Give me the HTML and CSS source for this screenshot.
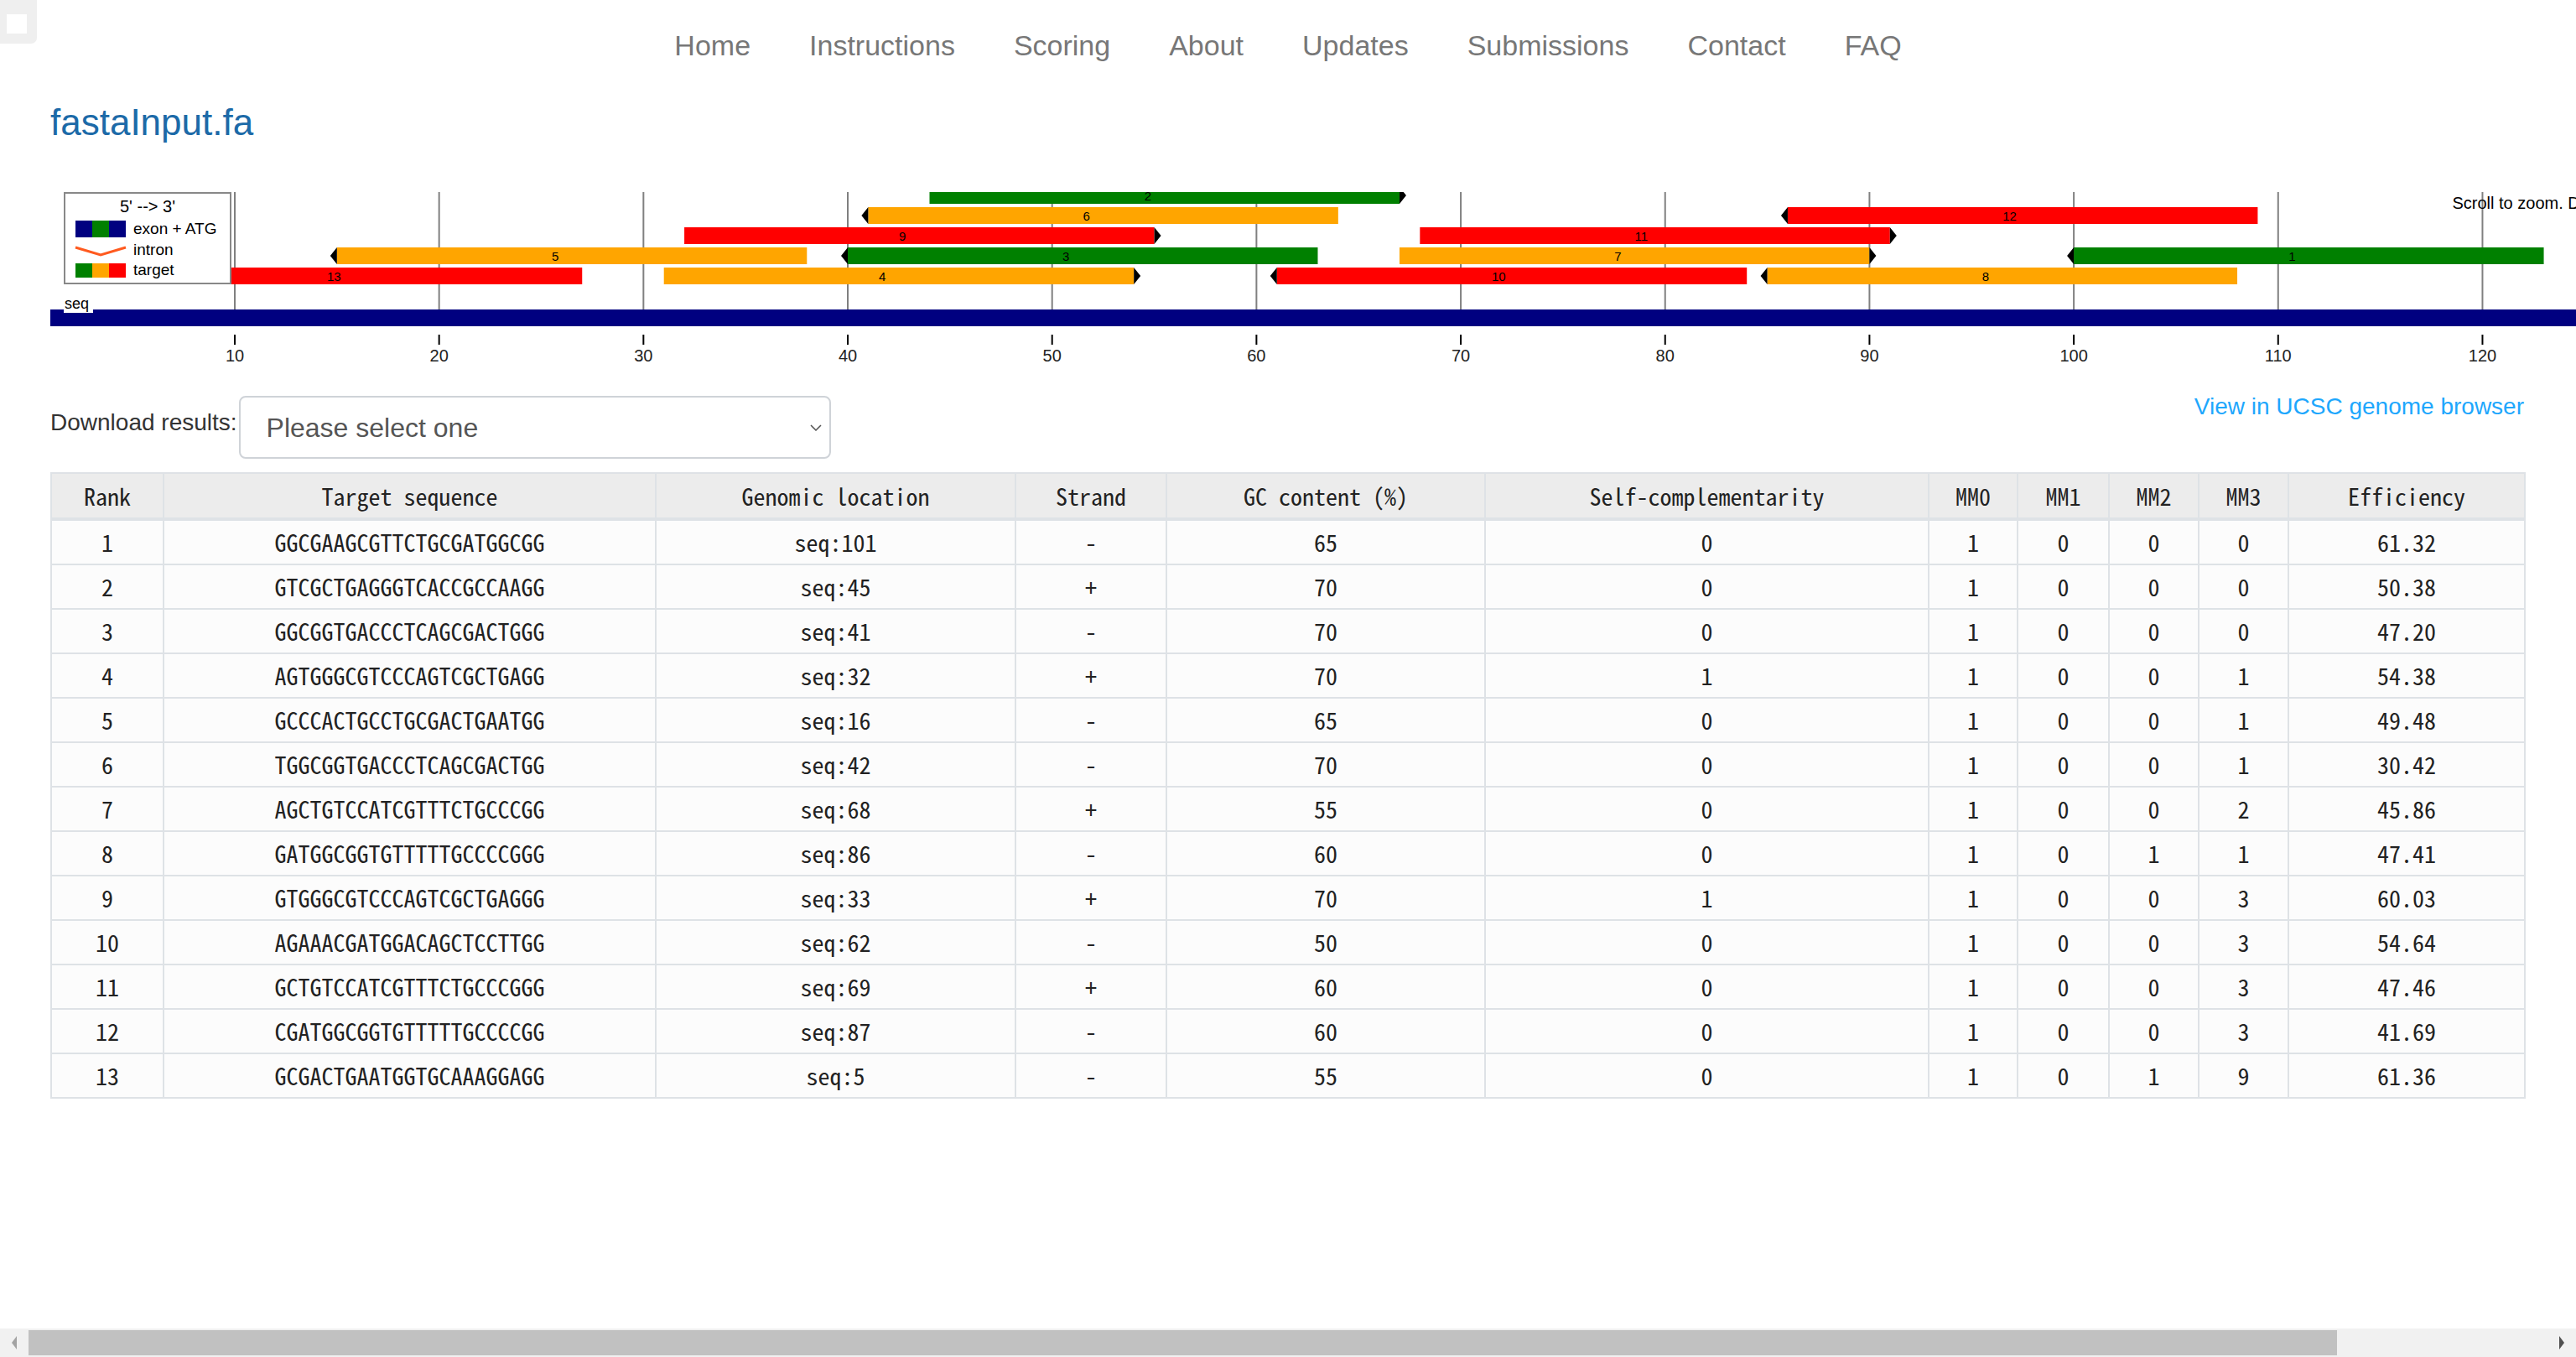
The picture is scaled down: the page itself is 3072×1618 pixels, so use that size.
FILE: index.html
```html
<!DOCTYPE html>
<html lang="en">
<head>
<meta charset="utf-8">
<title>fastaInput.fa</title>
<link rel="stylesheet" href="styles.css">
</head>
<body>
<header class="topbar">
  <div class="corner"><div class="corner-inner"></div></div>
  <nav class="nav">
    <a href="#">Home</a>
    <a href="#">Instructions</a>
    <a href="#">Scoring</a>
    <a href="#">About</a>
    <a href="#">Updates</a>
    <a href="#">Submissions</a>
    <a href="#">Contact</a>
    <a href="#">FAQ</a>
  </nav>
  <div></div>
</header>

<main class="main">
  <h3 class="title">fastaInput.fa</h3>

  <div class="chart-wrap">
  <svg class="chart" width="3292" height="210" viewBox="0 0 3292 210" xmlns="http://www.w3.org/2000/svg">
    <g class="grid">
      <line x1="220" y1="0" x2="220" y2="140"/>
      <line x1="463.66" y1="0" x2="463.66" y2="140"/>
      <line x1="707.34" y1="0" x2="707.34" y2="140"/>
      <line x1="951.02" y1="0" x2="951.02" y2="140"/>
      <line x1="1194.7" y1="0" x2="1194.7" y2="140"/>
      <line x1="1438.38" y1="0" x2="1438.38" y2="140"/>
      <line x1="1682.06" y1="0" x2="1682.06" y2="140"/>
      <line x1="1925.74" y1="0" x2="1925.74" y2="140"/>
      <line x1="2169.42" y1="0" x2="2169.42" y2="140"/>
      <line x1="2413.1" y1="0" x2="2413.1" y2="140"/>
      <line x1="2656.78" y1="0" x2="2656.78" y2="140"/>
      <line x1="2900.46" y1="0" x2="2900.46" y2="140"/>
    </g>
    <g class="ticks">
      <line x1="220" y1="170" x2="220" y2="182"/>
      <line x1="463.66" y1="170" x2="463.66" y2="182"/>
      <line x1="707.34" y1="170" x2="707.34" y2="182"/>
      <line x1="951.02" y1="170" x2="951.02" y2="182"/>
      <line x1="1194.7" y1="170" x2="1194.7" y2="182"/>
      <line x1="1438.38" y1="170" x2="1438.38" y2="182"/>
      <line x1="1682.06" y1="170" x2="1682.06" y2="182"/>
      <line x1="1925.74" y1="170" x2="1925.74" y2="182"/>
      <line x1="2169.42" y1="170" x2="2169.42" y2="182"/>
      <line x1="2413.1" y1="170" x2="2413.1" y2="182"/>
      <line x1="2656.78" y1="170" x2="2656.78" y2="182"/>
      <line x1="2900.46" y1="170" x2="2900.46" y2="182"/>
    </g>
    <g class="axis-labels">
      <text x="220" y="202">10</text>
      <text x="463.66" y="202">20</text>
      <text x="707.34" y="202">30</text>
      <text x="951.02" y="202">40</text>
      <text x="1194.7" y="202">50</text>
      <text x="1438.38" y="202">60</text>
      <text x="1682.06" y="202">70</text>
      <text x="1925.74" y="202">80</text>
      <text x="2169.42" y="202">90</text>
      <text x="2413.1" y="202">100</text>
      <text x="2656.78" y="202">110</text>
      <text x="2900.46" y="202">120</text>
    </g>

    <g class="targets">
      <!-- row 1 -->
      <rect class="t-green" x="1048.49" y="-6" width="560.47" height="20"/>
      <polygon class="arrow" points="1608.96,-6 1616.96,4 1608.96,14"/>
      <text class="t-label" x="1304.7" y="10">2</text>
      <!-- row 2 -->
      <rect class="t-orange" x="975.39" y="18" width="560.46" height="20"/>
      <polygon class="arrow" points="975.39,18 967.39,28 975.39,38"/>
      <text class="t-label" x="1231.6" y="34">6</text>
      <rect class="t-red" x="2071.95" y="18" width="560.46" height="20"/>
      <polygon class="arrow" points="2071.95,18 2063.95,28 2071.95,38"/>
      <text class="t-label" x="2328.2" y="34">12</text>
      <!-- row 3 -->
      <rect class="t-red" x="756.08" y="42" width="560.46" height="20"/>
      <polygon class="arrow" points="1316.54,42 1324.54,52 1316.54,62"/>
      <text class="t-label" x="1012" y="58">9</text>
      <rect class="t-red" x="1633.32" y="42" width="560.47" height="20"/>
      <polygon class="arrow" points="2193.79,42 2201.79,52 2193.79,62"/>
      <text class="t-label" x="1889.5" y="58">11</text>
      <!-- row 4 -->
      <rect class="t-orange" x="341.82" y="66" width="560.46" height="20"/>
      <polygon class="arrow" points="341.82,66 333.82,76 341.82,86"/>
      <text class="t-label" x="598" y="82">5</text>
      <rect class="t-green" x="951.02" y="66" width="560.46" height="20"/>
      <polygon class="arrow" points="951.02,66 943.02,76 951.02,86"/>
      <text class="t-label" x="1207" y="82">3</text>
      <rect class="t-orange" x="1608.96" y="66" width="560.46" height="20"/>
      <polygon class="arrow" points="2169.42,66 2177.42,76 2169.42,86"/>
      <text class="t-label" x="1865.2" y="82">7</text>
      <rect class="t-green" x="2413.1" y="66" width="560.46" height="20"/>
      <polygon class="arrow" points="2413.1,66 2405.1,76 2413.1,86"/>
      <text class="t-label" x="2669.3" y="82">1</text>
      <!-- row 5 -->
      <rect class="t-red" x="73.77" y="90" width="560.47" height="20"/>
      <polygon class="arrow" points="73.77,90 65.77,100 73.77,110"/>
      <text class="t-label" x="330" y="106">13</text>
      <rect class="t-orange" x="731.71" y="90" width="560.46" height="20"/>
      <polygon class="arrow" points="1292.17,90 1300.17,100 1292.17,110"/>
      <text class="t-label" x="988" y="106">4</text>
      <rect class="t-red" x="1462.75" y="90" width="560.46" height="20"/>
      <polygon class="arrow" points="1462.75,90 1454.75,100 1462.75,110"/>
      <text class="t-label" x="1719" y="106">10</text>
      <rect class="t-orange" x="2047.58" y="90" width="560.46" height="20"/>
      <polygon class="arrow" points="2047.58,90 2039.58,100 2047.58,110"/>
      <text class="t-label" x="2303.8" y="106">8</text>
    </g>

    <rect class="seq-bar" x="0" y="140" width="3292" height="20"/>
    <rect class="seq-bg" x="16" y="124" width="35" height="20"/>
    <text class="seq-label" x="17" y="139">seq</text>

    <g class="legend">
      <rect class="legend-box" x="17" y="1" width="198" height="108"/>
      <text class="legend-title" x="116" y="24">5' --&gt; 3'</text>
      <rect class="c-navy" x="30" y="34" width="20" height="20"/>
      <rect class="c-green" x="50" y="34" width="20" height="20"/>
      <rect class="c-navy" x="70" y="34" width="20" height="20"/>
      <text class="legend-text" x="99" y="50">exon + ATG</text>
      <polyline class="intron" points="30,66 60,75 90,66"/>
      <text class="legend-text" x="99" y="75">intron</text>
      <rect class="c-green" x="30" y="85" width="20" height="17"/>
      <rect class="c-orange" x="50" y="85" width="20" height="17"/>
      <rect class="c-red" x="70" y="85" width="20" height="17"/>
      <text class="legend-text" x="99" y="99">target</text>
    </g>

    <text class="hint" x="2864.5" y="20">Scroll to zoom. Drag to pan.</text>
  </svg>
  </div>

  <div class="toolbar">
    <div class="download">
      <label for="dl">Download results:</label>
      <select id="dl" class="select">
        <option>Please select one</option>
        <option>CSV</option>
        <option>TSV</option>
      </select>
    </div>
    <a class="ucsc" href="#">View in UCSC genome browser</a>
  </div>

  <table class="results">
    <colgroup>
      <col class="w-rank">
      <col class="w-seq">
      <col class="w-loc">
      <col class="w-strand">
      <col class="w-gc">
      <col class="w-self">
      <col class="w-mm0">
      <col class="w-mm1">
      <col class="w-mm2">
      <col class="w-mm3">
      <col class="w-eff">
    </colgroup>
    <thead>
      <tr>
        <th>Rank</th><th>Target sequence</th><th>Genomic location</th><th>Strand</th><th>GC content (%)</th><th>Self-complementarity</th><th>MM0</th><th>MM1</th><th>MM2</th><th>MM3</th><th>Efficiency</th>
      </tr>
    </thead>
    <tbody>
      <tr><td>1</td><td>GGCGAAGCGTTCTGCGATGGCGG</td><td>seq:101</td><td>-</td><td>65</td><td>0</td><td>1</td><td>0</td><td>0</td><td>0</td><td>61.32</td></tr>
      <tr><td>2</td><td>GTCGCTGAGGGTCACCGCCAAGG</td><td>seq:45</td><td>+</td><td>70</td><td>0</td><td>1</td><td>0</td><td>0</td><td>0</td><td>50.38</td></tr>
      <tr><td>3</td><td>GGCGGTGACCCTCAGCGACTGGG</td><td>seq:41</td><td>-</td><td>70</td><td>0</td><td>1</td><td>0</td><td>0</td><td>0</td><td>47.20</td></tr>
      <tr><td>4</td><td>AGTGGGCGTCCCAGTCGCTGAGG</td><td>seq:32</td><td>+</td><td>70</td><td>1</td><td>1</td><td>0</td><td>0</td><td>1</td><td>54.38</td></tr>
      <tr><td>5</td><td>GCCCACTGCCTGCGACTGAATGG</td><td>seq:16</td><td>-</td><td>65</td><td>0</td><td>1</td><td>0</td><td>0</td><td>1</td><td>49.48</td></tr>
      <tr><td>6</td><td>TGGCGGTGACCCTCAGCGACTGG</td><td>seq:42</td><td>-</td><td>70</td><td>0</td><td>1</td><td>0</td><td>0</td><td>1</td><td>30.42</td></tr>
      <tr><td>7</td><td>AGCTGTCCATCGTTTCTGCCCGG</td><td>seq:68</td><td>+</td><td>55</td><td>0</td><td>1</td><td>0</td><td>0</td><td>2</td><td>45.86</td></tr>
      <tr><td>8</td><td>GATGGCGGTGTTTTTGCCCCGGG</td><td>seq:86</td><td>-</td><td>60</td><td>0</td><td>1</td><td>0</td><td>1</td><td>1</td><td>47.41</td></tr>
      <tr><td>9</td><td>GTGGGCGTCCCAGTCGCTGAGGG</td><td>seq:33</td><td>+</td><td>70</td><td>1</td><td>1</td><td>0</td><td>0</td><td>3</td><td>60.03</td></tr>
      <tr><td>10</td><td>AGAAACGATGGACAGCTCCTTGG</td><td>seq:62</td><td>-</td><td>50</td><td>0</td><td>1</td><td>0</td><td>0</td><td>3</td><td>54.64</td></tr>
      <tr><td>11</td><td>GCTGTCCATCGTTTCTGCCCGGG</td><td>seq:69</td><td>+</td><td>60</td><td>0</td><td>1</td><td>0</td><td>0</td><td>3</td><td>47.46</td></tr>
      <tr><td>12</td><td>CGATGGCGGTGTTTTTGCCCCGG</td><td>seq:87</td><td>-</td><td>60</td><td>0</td><td>1</td><td>0</td><td>0</td><td>3</td><td>41.69</td></tr>
      <tr><td>13</td><td>GCGACTGAATGGTGCAAAGGAGG</td><td>seq:5</td><td>-</td><td>55</td><td>0</td><td>1</td><td>0</td><td>1</td><td>9</td><td>61.36</td></tr>
    </tbody>
  </table>
</main>

<div class="hscroll" aria-hidden="true">
  <span class="hs-btn hs-left"></span>
  <span class="hs-track"><span class="hs-thumb"></span></span>
  <span class="hs-btn hs-right"></span>
</div>
</body>
</html>
```

FILE: styles.css
```css
html, body {
  margin: 0;
  padding: 0;
}

body {
  font-family: "Liberation Sans", Arial, sans-serif;
  color: #333;
  background: #fff;
}

/* header */
.topbar {
  display: grid;
  grid-template-columns: 1fr auto 1fr;
  align-items: start;
}

.corner {
  width: 44px;
  height: 52px;
  box-sizing: border-box;
  padding: 17px 12px 12px 8px;
  background: #efefef;
  border-bottom-right-radius: 7px;
}

.corner-inner {
  width: 24px;
  height: 23px;
  background: #fff;
}

.nav {
  display: flex;
  padding-top: 30px;
}

.nav a {
  font-size: 34px;
  line-height: 48px;
  color: #777;
  text-decoration: none;
  padding: 0 35px;
}

/* main */
.main {
  padding: 0 62px 0 60px;
}

.title {
  margin: 41px 0 0;
  font-size: 44px;
  line-height: 53px;
  font-weight: normal;
  color: #1c6aa8;
}

/* chart */
.chart-wrap {
  margin: 57px -62px 0 0;
  overflow: hidden;
}

.chart {
  display: block;
  font-family: "Liberation Sans", Arial, sans-serif;
}

.grid line {
  stroke: #808080;
  stroke-width: 2;
}

.ticks line {
  stroke: #000;
  stroke-width: 2;
}

.axis-labels text {
  font-size: 20px;
  fill: #222;
  text-anchor: middle;
}

.t-green { fill: #008000; }
.t-orange { fill: #ffa500; }
.t-red { fill: #ff0000; }

.arrow { fill: #000; }

.t-label {
  font-size: 15px;
  fill: #000;
}

.seq-bar { fill: #000080; }
.seq-bg { fill: #fff; }
.seq-label {
  font-size: 18px;
  fill: #000;
}

.legend-box {
  fill: #fff;
  stroke: #888;
  stroke-width: 2;
}

.legend-title {
  font-size: 20px;
  fill: #000;
  text-anchor: middle;
}

.legend-text {
  font-size: 19px;
  fill: #000;
}

.c-navy { fill: #000080; }
.c-green { fill: #008000; }
.c-orange { fill: #ffa500; }
.c-red { fill: #ff0000; }

.intron {
  fill: none;
  stroke: #ff5a1f;
  stroke-width: 3;
}

.hint {
  font-size: 20px;
  fill: #000;
}

/* toolbar */
.toolbar {
  display: flex;
  justify-content: space-between;
  align-items: flex-start;
  margin-top: 26px;
}

.download {
  display: flex;
  align-items: center;
  margin-top: 7px;
}

.download label {
  font-size: 28px;
  line-height: 40px;
  color: #333;
  margin: 0 2px 12px 0;
}

.select {
  appearance: none;
  -webkit-appearance: none;
  box-sizing: border-box;
  width: 706px;
  height: 75px;
  margin: 0;
  padding: 0 40px 0 31px;
  border: 2px solid #cfd3d8;
  border-radius: 8px;
  font-family: "Liberation Sans", Arial, sans-serif;
  font-size: 32px;
  color: #555;
  background: #fff url("data:image/svg+xml,%3Csvg xmlns='http://www.w3.org/2000/svg' width='14' height='8'%3E%3Cpath d='M1 1 L7 7 L13 1' fill='none' stroke='%23555' stroke-width='1.5'/%3E%3C/svg%3E") no-repeat right 9px center;
  background-size: 14px 8px;
}

.ucsc {
  font-size: 28px;
  line-height: 40px;
  color: #1ea7fd;
  text-decoration: none;
}

/* table */
.results {
  width: 100%;
  margin-top: 16px;
  border-collapse: collapse;
  table-layout: fixed;
  font-family: "Noto Sans Mono CJK SC", "Liberation Mono", monospace;
  font-size: 28px;
  color: #222;
}

.results th,
.results td {
  border: 2px solid #dee2e6;
  text-align: center;
  vertical-align: middle;
  font-weight: normal;
  padding: 8px 4px;
  white-space: nowrap;
}

.results th {
  background: #ececec;
  line-height: 36px;
  border-bottom-width: 4px;
}

.results td {
  background: #fcfcfc;
  line-height: 35px;
}

.w-rank { width: 134px; }
.w-seq { width: 587px; }
.w-loc { width: 429px; }
.w-strand { width: 180px; }
.w-gc { width: 380px; }
.w-self { width: 529px; }
.w-mm0 { width: 106px; }
.w-mm1 { width: 109px; }
.w-mm2 { width: 107px; }
.w-mm3 { width: 107px; }
.w-eff { width: 282px; }

.hscroll {
  position: fixed;
  left: 0;
  right: 0;
  bottom: 0;
  height: 34px;
  display: flex;
  background: #f1f1f1;
}

.hs-btn {
  width: 34px;
  flex: none;
  display: flex;
  align-items: center;
  justify-content: center;
}

.hs-left::before,
.hs-right::before {
  content: "";
  width: 0;
  height: 0;
  border-top: 8px solid transparent;
  border-bottom: 8px solid transparent;
}

.hs-left::before {
  border-right: 6px solid #a3a3a3;
}

.hs-right::before {
  border-left: 6px solid #505050;
}

.hs-track {
  flex: 1;
  display: flex;
  padding: 2px 0;
}

.hs-thumb {
  width: 91.65%;
  background: #c1c1c1;
}
```
